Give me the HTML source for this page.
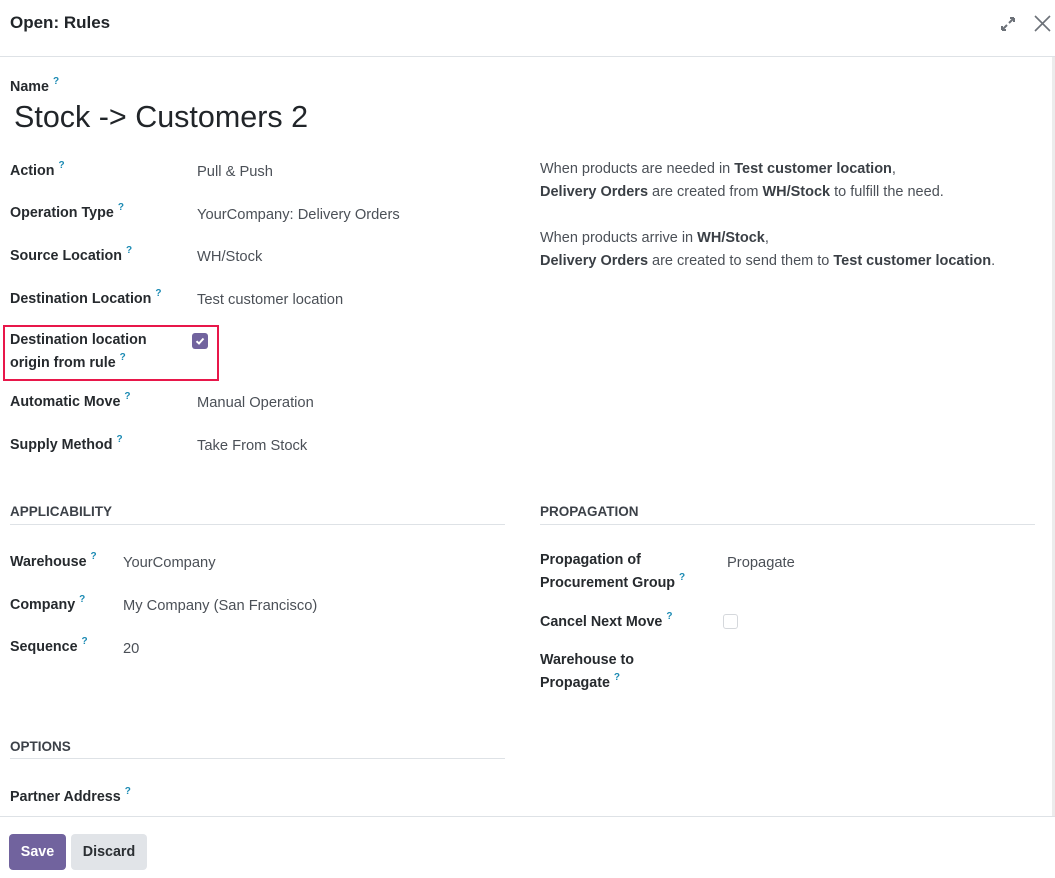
<!DOCTYPE html>
<html><head><meta charset="utf-8"><style>
html,body{margin:0;padding:0;background:#fff;}
body{width:1055px;height:878px;position:relative;overflow:hidden;font-family:"Liberation Sans",sans-serif;color:#212529;}
.a{position:absolute;white-space:nowrap;line-height:18px;}
.l{font-size:14.3px;font-weight:bold;color:#262a2e;}
.v{font-size:14.7px;color:#4b5057;}
.q{font-size:10px;color:#1b8ab3;vertical-align:7px;margin-left:4px;font-weight:bold;line-height:0;}
.h{font-size:13.5px;font-weight:bold;color:#3c4148;}
.line{position:absolute;height:1px;background:#dee2e6;}
.d{font-size:14.5px;color:#4b5057;}
.d b{color:#3a3f45;}
</style></head><body>
<div class="a" style="left:10px;top:13px;font-size:17px;line-height:20px;color:#212529;font-weight:bold;">Open: Rules</div>
<svg class="a" style="left:1000px;top:16px" width="16" height="16" viewBox="0 0 16 16"><path d="M2 14L7 9M2 14V10M2 14H6M14 2L9 7M14 2V6M14 2H10" stroke="#6c7178" stroke-width="2" fill="none"/></svg>
<svg class="a" style="left:1034px;top:15px" width="17" height="17" viewBox="0 0 17 17"><path d="M1 1L16 16M16 1L1 16" stroke="#6c7178" stroke-width="1.6"/></svg>
<div class="line" style="left:0;top:56px;width:1055px;"></div>
<div style="position:absolute;left:1052px;top:57px;width:3px;height:759px;background:#ececec"></div>

<div class="a l" style="left:10px;top:78px">Name<span class="q">?</span></div>
<div class="a" style="left:14px;top:100px;font-size:30.5px;line-height:34px;color:#212529">Stock -&gt; Customers 2</div>

<div class="a l" style="left:10px;top:162px">Action<span class="q">?</span></div>
<div class="a v" style="left:197px;top:163px">Pull &amp; Push</div>
<div class="a l" style="left:10px;top:204px">Operation Type<span class="q">?</span></div>
<div class="a v" style="left:197px;top:206px">YourCompany: Delivery Orders</div>
<div class="a l" style="left:10px;top:247px">Source Location<span class="q">?</span></div>
<div class="a v" style="left:197px;top:248px">WH/Stock</div>
<div class="a l" style="left:10px;top:290px">Destination Location<span class="q">?</span></div>
<div class="a v" style="left:197px;top:291px">Test customer location</div>

<div style="position:absolute;left:3px;top:325px;width:212px;height:52px;border:2px solid #e8174a;"></div>
<div class="a l" style="left:10px;top:329px;line-height:23px">Destination location<br>origin from rule<span class="q">?</span></div>
<div style="position:absolute;left:192px;top:333px;width:16px;height:16px;border-radius:3px;background:#71639e;"></div>
<svg class="a" style="left:192px;top:333px" width="16" height="16" viewBox="0 0 16 16"><path d="M4.5 8.2L7 10.5L11.5 5.5" stroke="#fff" stroke-width="2" fill="none"/></svg>

<div class="a l" style="left:10px;top:393px">Automatic Move<span class="q">?</span></div>
<div class="a v" style="left:197px;top:394px">Manual Operation</div>
<div class="a l" style="left:10px;top:436px">Supply Method<span class="q">?</span></div>
<div class="a v" style="left:197px;top:437px">Take From Stock</div>

<div class="a d" style="left:540px;top:158px;line-height:23px">When products are needed in <b>Test customer location</b>,<br><b>Delivery Orders</b> are created from <b>WH/Stock</b> to fulfill the need.</div>
<div class="a d" style="left:540px;top:227px;line-height:23px">When products arrive in <b>WH/Stock</b>,<br><b>Delivery Orders</b> are created to send them to <b>Test customer location</b>.</div>

<div class="a h" style="left:10px;top:503px">APPLICABILITY</div>
<div class="line" style="left:10px;top:524px;width:495px;"></div>
<div class="a h" style="left:540px;top:503px">PROPAGATION</div>
<div class="line" style="left:540px;top:524px;width:495px;"></div>

<div class="a l" style="left:10px;top:553px">Warehouse<span class="q">?</span></div>
<div class="a v" style="left:123px;top:554px">YourCompany</div>
<div class="a l" style="left:10px;top:596px">Company<span class="q">?</span></div>
<div class="a v" style="left:123px;top:597px">My Company (San Francisco)</div>
<div class="a l" style="left:10px;top:638px">Sequence<span class="q">?</span></div>
<div class="a v" style="left:123px;top:640px">20</div>

<div class="a l" style="left:540px;top:549px;line-height:23px">Propagation of<br>Procurement Group<span class="q">?</span></div>
<div class="a v" style="left:727px;top:554px">Propagate</div>
<div class="a l" style="left:540px;top:613px">Cancel Next Move<span class="q">?</span></div>
<div style="position:absolute;left:723px;top:614px;width:13px;height:13px;border:1px solid #d5d8dc;border-radius:3px;"></div>
<div class="a l" style="left:540px;top:649px;line-height:23px">Warehouse to<br>Propagate<span class="q">?</span></div>

<div class="a h" style="left:10px;top:738px">OPTIONS</div>
<div class="line" style="left:10px;top:758px;width:495px;"></div>
<div class="a l" style="left:10px;top:788px">Partner Address<span class="q">?</span></div>

<div class="line" style="left:0;top:816px;width:1055px;"></div>
<div style="position:absolute;left:9px;top:834px;width:57px;height:36px;border-radius:4px;background:#71639e;color:#fff;font-size:14.3px;font-weight:bold;line-height:36px;text-align:center;">Save</div>
<div style="position:absolute;left:71px;top:834px;width:76px;height:36px;border-radius:4px;background:#e1e4e8;color:#2b2f33;font-size:14.3px;font-weight:bold;line-height:36px;text-align:center;">Discard</div>
</body></html>
